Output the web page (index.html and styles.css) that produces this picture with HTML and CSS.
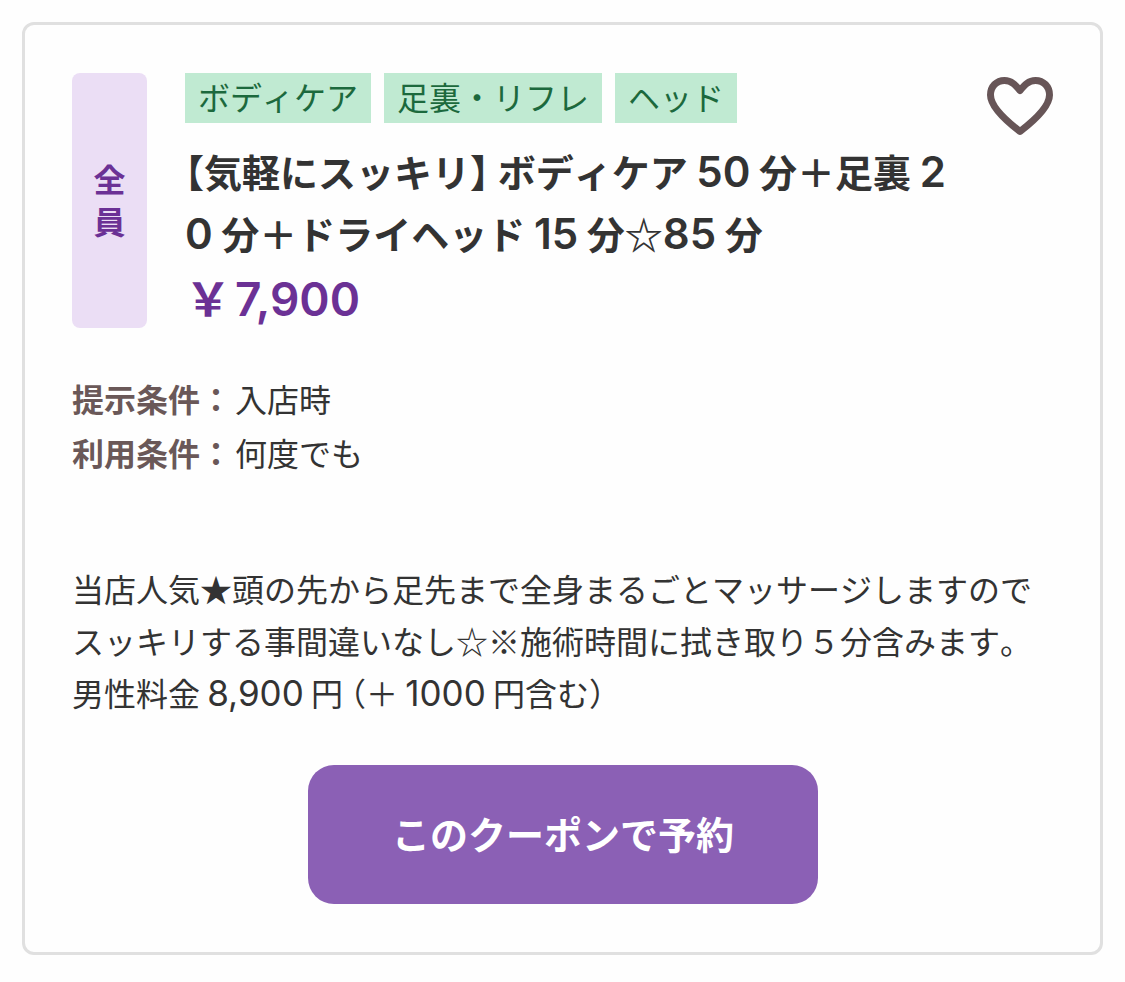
FILE: index.html
```html
<!DOCTYPE html>
<html lang="ja">
<head>
<meta charset="utf-8">
<meta name="viewport" content="width=device-width, initial-scale=1">
<title>クーポン</title>
<link rel="stylesheet" href="styles.css">
</head>
<body>
<main class="page">
  <article class="coupon">
    <header class="head">
      <div class="target"><span>全員</span></div>
      <div class="summary">
        <ul class="tags">
          <li class="tag">ボディケア</li>
          <li class="tag">足裏・リフレ</li>
          <li class="tag">ヘッド</li>
        </ul>
        <h1 class="title"><span class="half">【</span>気軽にスッキリ<span class="half">】</span> ボディケア <span class="num">50</span> 分＋足裏 <span class="num">2</span><br><span class="num">0</span> 分＋ドライヘッド <span class="num">15</span> 分☆<span class="num">85</span> 分</h1>
        <p class="price"><span class="yen">￥</span>7,900</p>
      </div>
      <button class="favorite" type="button" aria-label="お気に入り">
        <svg class="heart" viewBox="0 0 68 60" aria-hidden="true"><path d="M34 55.500C21 45.500 4.500 31 4.500 19C4.500 10.500 10.500 4.500 18.500 4.500C25.500 4.500 29.500 9 34 14.500C38.500 9 42.500 4.500 49.500 4.500C57.500 4.500 63.500 10.500 63.500 19C63.500 31 47 45.500 34 55.500Z"/></svg>
      </button>
    </header>
    <dl class="terms">
      <div class="term"><dt>提示条件：</dt><dd>入店時</dd></div>
      <div class="term"><dt>利用条件：</dt><dd>何度でも</dd></div>
    </dl>
    <p class="description">当店人気★頭の先から足先まで全身まるごとマッサージしますのでスッキリする事間違いなし☆※施術時間に拭き取り５分含みます。<br>男性料金 <span class="num">8,900</span> 円 <span class="half">（</span>＋ <span class="num">1000</span> 円含む<span class="half">）</span></p>
    <button class="reserve" type="button">このクーポンで予約</button>
  </article>
</main>
</body>
</html>
```
FILE: styles.css
```css
* {
  box-sizing: border-box;
  margin: 0;
  padding: 0;
}

body {
  background: #fefefe;
  color: #333;
  font-family: "Noto Sans CJK JP", sans-serif;
  font-size: 32px;
  font-kerning: none;
}

button {
  border: 0;
  background: none;
  font-family: inherit;
  cursor: pointer;
}

.page {
  padding: 22px;
}

.coupon {
  display: flex;
  flex-direction: column;
  padding: 48px 46px 48px 47px;
  border: 3px solid #e0e0e0;
  border-radius: 12px;
}

.head {
  display: flex;
  align-items: stretch;
}

.target {
  display: flex;
  align-items: center;
  justify-content: center;
  flex: none;
  width: 75px;
  margin-right: 38px;
  padding-bottom: 4px;
  border-radius: 8px;
  background: #ebdef5;
  color: #6b3195;
  font-weight: 700;
}

.target span {
  width: 32px;
  line-height: 42px;
  word-break: break-all;
}

.summary {
  flex: 1;
  min-width: 0;
}

.tags {
  display: flex;
  flex-wrap: wrap;
  gap: 13px;
  list-style: none;
}

.tag {
  padding: 0 13px 4px;
  background: #c0ead2;
  color: #1c693d;
  line-height: 46px;
}

.title {
  margin-top: 17px;
  font-size: 38px;
  font-weight: 700;
  line-height: 62px;
}

.half {
  font-feature-settings: "halt";
}

.num {
  font-family: Inter, sans-serif;
  font-kerning: normal;
  line-height: 1;
}

.title .num {
  font-size: 42px;
  font-weight: 600;
}

.price {
  margin-top: 6px;
  color: #6b3195;
  font-family: Inter, sans-serif;
  font-size: 46px;
  font-kerning: normal;
  font-weight: 600;
  line-height: 58px;
}

.yen {
  margin-right: 4px;
  font-family: "Noto Sans CJK JP", sans-serif;
  line-height: 1;
}

.favorite {
  flex: none;
  align-self: flex-start;
  padding-top: 3px;
}

.heart {
  display: block;
  width: 68px;
  height: 60px;
  fill: none;
  stroke: #675557;
  stroke-width: 7;
  stroke-linejoin: round;
}

.terms {
  margin-top: 43px;
  line-height: 54px;
}

.term {
  display: flex;
  gap: 3px;
}

.term dt {
  color: #6a5858;
  font-weight: 700;
}

.description {
  margin-top: 83px;
  line-height: 52px;
}

.description .num {
  font-size: 35px;
}

.reserve {
  align-self: center;
  width: 52%;
  margin-top: 47px;
  padding: 38px 16px 42px;
  border-radius: 26px;
  background: #8b60b5;
  color: #fff;
  font-size: 38px;
  font-weight: 700;
  line-height: 59px;
}
```
